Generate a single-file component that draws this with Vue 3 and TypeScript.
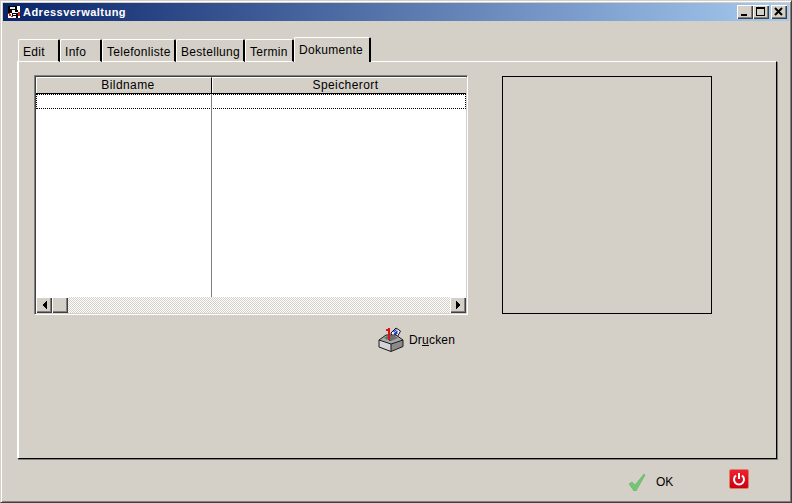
<template>
  <div class="window">
    <div class="titlebar">
      <svg class="app-icon" width="16" height="16" viewBox="0 0 16 16" shape-rendering="crispEdges">
        <rect x="2" y="2" width="12" height="12" fill="#fff" />
        <rect x="2" y="2" width="9" height="4" fill="#000" />
        <rect x="4" y="3" width="5" height="2" fill="#e8e8e8" />
        <rect x="2" y="6" width="4" height="3" fill="#000" />
        <rect x="9" y="6" width="3" height="2" fill="#000" />
        <rect x="6" y="9" width="6" height="3" fill="#000" />
        <rect x="7" y="10" width="3" height="1" fill="#fff" />
        <rect x="2" y="9" width="2" height="1" fill="#e01818" />
        <rect x="3" y="10" width="2" height="2" fill="#e01818" />
        <rect x="5" y="12" width="2" height="1" fill="#e01818" />
        <rect x="12" y="8" width="2" height="4" fill="#e01818" />
        <rect x="10" y="12" width="2" height="2" fill="#000" />
      </svg>
      <span class="title">Adressverwaltung</span>
      <div class="caption-buttons">
        <button class="caption-btn">
          <svg width="16" height="14" viewBox="0 0 16 14" shape-rendering="crispEdges"><rect x="4" y="9" width="6" height="2" fill="#000" /></svg>
        </button>
        <button class="caption-btn">
          <svg width="16" height="14" viewBox="0 0 16 14" shape-rendering="crispEdges"><path d="M3 2h9v9H3z M4 4v6h7V4z" fill="#000" fill-rule="evenodd" /></svg>
        </button>
        <button class="caption-btn close">
          <svg width="16" height="14" viewBox="0 0 16 14"><path d="M4 3l7 7M11 3l-7 7" stroke="#000" stroke-width="2" fill="none" /></svg>
        </button>
      </div>
    </div>

    <div class="body">
      <div class="tabs">
        <div
          v-for="tab in tabs"
          :key="tab.label"
          class="tab"
          :class="{ active: tab.label === activeTab }"
          :style="{ width: tab.width + 'px' }"
        >
          {{ tab.label }}
        </div>
      </div>

      <div class="panel">
        <div class="content">
          <div class="left">
            <div class="grid">
              <div class="grid-head">
                <div class="head-cell first">Bildname</div>
                <div class="head-cell second">Speicherort</div>
              </div>
              <div class="grid-rows">
                <div class="col-line"></div>
                <div class="row-focus"></div>
              </div>
              <div class="scrollbar">
                <div class="sb-btn">
                  <svg width="5" height="8" viewBox="0 0 5 8" shape-rendering="crispEdges"><path d="M4 0h1v8H4zM3 1h1v6H3zM2 2h1v4H2zM1 3h1v2H1z" fill="#000" /></svg>
                </div>
                <div class="sb-btn thumb"></div>
                <div class="sb-track"></div>
                <div class="sb-btn">
                  <svg width="5" height="8" viewBox="0 0 5 8" shape-rendering="crispEdges"><path d="M0 0h1v8H0zM1 1h1v6H1zM2 2h1v4H2zM3 3h1v2H3z" fill="#000" /></svg>
                </div>
              </div>
            </div>

            <div class="print-row">
              <svg class="printer" width="26" height="26" viewBox="0 0 26 26">
                <path d="M13 6l5-5 4.500 3-4 7.500h-4z" fill="#fff" stroke="#111" stroke-width="1" />
                <path d="M15.500 5l3-2.500M16 7l3.500-3M15.500 9.500l4-4" stroke="#2038c8" stroke-width="1.200" fill="none" />
                <path d="M1 13l7-5h10l7 5-12 4z" fill="#a8a8a8" />
                <path d="M6 11l3-2h8l3 2-7 3z" fill="#6e6e6e" />
                <path d="M1 13l12 4v7l-12-4z" fill="#d4d4d4" />
                <path d="M13 17l12-4v6.500l-12 4.500z" fill="#8a8a8a" />
                <path d="M1 13v7l12 4.500 12-5V13l-7-5H8zM1 13l12 4 12-4M13 17v7" fill="none" stroke="#1a1a1a" stroke-width="1" />
                <g shape-rendering="crispEdges">
                  <rect x="10" y="1" width="2" height="12" fill="#e01010" />
                  <rect x="8" y="2" width="2" height="2" fill="#e01010" />
                  <rect x="8" y="12" width="2" height="1" fill="#20c838" />
                  <rect x="11" y="13" width="2" height="1" fill="#2040e0" />
                </g>
              </svg>
              <span class="print-label">Dr<u>u</u>cken</span>
            </div>
          </div>

          <div class="preview"></div>
        </div>
      </div>

      <div class="footer">
        <div class="ok">
          <svg width="18" height="18" viewBox="0 0 18 18">
            <path d="M1 11l3-2 3 3 9-11 1 1-9 16H6z" fill="#72c872" stroke="#5aa85a" stroke-width="0.500" />
          </svg>
          <span>OK</span>
        </div>
        <div class="power">
          <svg width="14" height="14" viewBox="0 0 14 14">
            <path d="M4 3.500a5 5 0 1 0 6 0" fill="none" stroke="#fff" stroke-width="2" />
            <path d="M7 1v6" stroke="#fff" stroke-width="2" />
          </svg>
        </div>
      </div>
    </div>
  </div>
</template>

<script setup lang="ts">
const activeTab = 'Dokumente'

const tabs = [
  { label: 'Edit', width: 42 },
  { label: 'Info', width: 42 },
  { label: 'Telefonliste', width: 74 },
  { label: 'Bestellung', width: 69 },
  { label: 'Termin', width: 49 },
  { label: 'Dokumente', width: 77 },
]
</script>

<style>
html,
body {
  margin: 0;
  background: #d4d0c8;
}
</style>

<style scoped>
.window {
  box-sizing: border-box;
  width: 792px;
  height: 503px;
  display: flex;
  flex-direction: column;
  padding: 3px;
  background: #d4d0c8;
  border-top: 1px solid #d4d0c8;
  border-left: 1px solid #d4d0c8;
  border-right: 1px solid #404040;
  border-bottom: 1px solid #404040;
  box-shadow: inset 1px 1px 0 #fff, inset -1px -1px 0 #808080;
  font-family: "Liberation Sans", Arial, sans-serif;
  font-size: 12px;
  color: #000;
}

.titlebar {
  height: 18px;
  flex: none;
  display: flex;
  align-items: center;
  margin: -1px -1px 0 -1px;
  padding-left: 3px;
  background: linear-gradient(90deg, #0a246a, #a6caf0);
}

.app-icon {
  flex: none;
}

.title {
  margin-left: 1px;
  color: #fff;
  font-size: 11px;
  font-weight: bold;
  letter-spacing: 0.48px;
}

.caption-buttons {
  margin-left: auto;
  display: flex;
  padding-right: 2px;
}

.caption-btn {
  box-sizing: border-box;
  width: 16px;
  height: 14px;
  padding: 0;
  border: 0;
  display: block;
  background: #d4d0c8;
  box-shadow: inset 1px 1px 0 #fff, inset -1px -1px 0 #404040, inset -2px -2px 0 #808080;
}

.caption-btn svg {
  display: block;
}

.caption-btn.close {
  margin-left: 2px;
}

.body {
  flex: 1;
  display: flex;
  flex-direction: column;
  padding: 16px 11px 0 13px;
  min-height: 0;
}

.tabs {
  display: flex;
  align-items: flex-end;
  height: 25px;
  padding-left: 1px;
  position: relative;
  z-index: 1;
  margin-bottom: -1px;
}

.tab {
  box-sizing: border-box;
  height: 23px;
  flex: none;
  padding: 5px 0 0 4px;
  letter-spacing: 0.3px;
  background: #d4d0c8;
  border-top: 1px solid #fff;
  border-left: 1px solid #fff;
  border-right: 2px solid #000;
  border-top-left-radius: 2px;
  border-top-right-radius: 2px;
  white-space: nowrap;
  border-bottom: 1px solid #fff;
}

.tab.active {
  height: 25px;
  padding-top: 5px;
  border-bottom: 0;
}

.panel {
  box-sizing: border-box;
  width: 760px;
  height: 398px;
  flex: none;
  background: #d4d0c8;
  border-top: 1px solid #fff;
  border-left: 2px solid #fff;
  border-right: 1px solid #000;
  border-bottom: 1px solid #000;
  box-shadow: 1px 1px 0 #808080;
  padding: 13px 0 0 15px;
}

.content {
  display: flex;
  gap: 34px;
  align-items: flex-start;
}

.left {
  width: 434px;
  flex: none;
}

.grid {
  box-sizing: border-box;
  height: 240px;
  display: flex;
  flex-direction: column;
  background: #fff;
  border-top: 1px solid #808080;
  border-left: 1px solid #808080;
  border-right: 1px solid #fff;
  border-bottom: 1px solid #fff;
  box-shadow: inset 1px 1px 0 #404040, inset -1px -1px 0 #d4d0c8;
  padding: 1px;
}

.grid-head {
  display: flex;
  height: 17px;
  flex: none;
  border-bottom: 1px solid #000;
  box-sizing: border-box;
}

.head-cell {
  box-sizing: border-box;
  text-align: center;
  line-height: 15px;
  letter-spacing: 0.42px;
  background: #d4d0c8;
  border-top: 1px solid #fff;
  border-left: 1px solid #fff;
}

.head-cell.first {
  width: 176px;
  padding-left: 8px;
  border-right: 1px solid #000;
}

.head-cell.second {
  flex: 1;
  padding-left: 12px;
}

.grid-rows {
  flex: 1;
  position: relative;
}

.col-line {
  position: absolute;
  left: 175px;
  top: 0;
  bottom: 0;
  width: 1px;
  background: #808080;
}

.row-focus {
  height: 15px;
  box-sizing: border-box;
  border: 1px dotted #000;
}

.scrollbar {
  height: 16px;
  flex: none;
  display: flex;
  background-color: #fff;
  background-image: conic-gradient(#d4d0c8 25%, #fff 0 50%, #d4d0c8 0 75%, #fff 0);
  background-size: 2px 2px;
}

.sb-btn {
  box-sizing: border-box;
  width: 16px;
  height: 16px;
  flex: none;
  display: flex;
  align-items: center;
  justify-content: center;
  background: #d4d0c8;
  box-shadow: inset 1px 1px 0 #fff, inset -1px -1px 0 #404040, inset -2px -2px 0 #808080;
}

.sb-track {
  flex: 1;
}

.print-row {
  display: flex;
  align-items: center;
  margin: 12px 0 0 344px;
}

.printer {
  flex: none;
}

.print-label {
  margin-left: 5px;
  letter-spacing: 0.2px;
}

.preview {
  box-sizing: border-box;
  width: 210px;
  height: 238px;
  margin-top: 1px;
  border: 1px solid #000;
}

.footer {
  flex: 1;
  display: flex;
  align-items: center;
  padding: 2px 0 0 611px;
}

.ok {
  display: flex;
  align-items: center;
  gap: 10px;
  width: 101px;
  padding-top: 3px;
}

.power {
  width: 20px;
  height: 20px;
  box-sizing: border-box;
  display: flex;
  align-items: center;
  justify-content: center;
  background: linear-gradient(#f02030, #cc0010);
  border: 1px solid #d88060;
  border-radius: 2px;
  margin-bottom: 2px;
}
</style>
